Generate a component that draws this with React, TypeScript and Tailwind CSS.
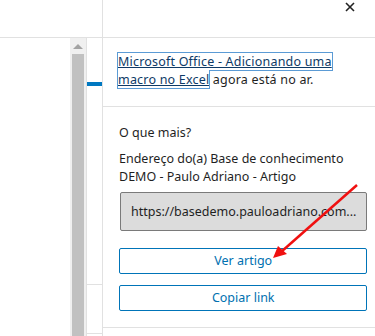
import React from "react";

export default function App() {
  const font = { fontFamily: '"Noto Sans", "Segoe UI", sans-serif' };
  return (
    <div className="relative flex h-[336px] w-[375px] overflow-hidden bg-white text-[12.5px] text-[#1f1f1f]" style={font}>
      {/* left column */}
      <div className="flex w-[102px] shrink-0 flex-col">
        <div className="h-[38px] shrink-0 border-b border-[#e1e1e1]" />
        <div className="flex flex-1">
          <div className="w-[70px]" />
          <div className="flex w-[17px] flex-col items-center border-r border-[#e1e1e1] bg-[#f0f0f0]">
            <div className="mt-[6px] h-0 w-0 border-x-[5px] border-b-[5px] border-x-transparent border-b-[#a3a3a3]" />
            <div className="mt-[5px] w-[12px] flex-1 bg-[#c1c1c1]" />
          </div>
          <div className="flex w-[15px] flex-col">
            <div className="mt-[44px] h-[4px] bg-[#0078c1]" />
            <div className="mt-[198px] h-[50px] border-y border-[#e1e1e1]" />
          </div>
        </div>
      </div>
      {/* right panel */}
      <div className="flex flex-1 flex-col border-l border-[#e1e1e1]">
        <div className="relative h-[38px] shrink-0 border-b border-[#e1e1e1]">
          <svg className="absolute left-[242px] top-[2px]" width="10" height="10" viewBox="0 0 10 10">
            <path d="M1 1L9 9M9 1L1 9" stroke="#222" strokeWidth="1.6" />
          </svg>
        </div>
        <div className="border-b border-[#e1e1e1] pb-[17px] pl-[15px] pr-[32px] pt-[15px] leading-[18px] tracking-[0.2px]">
          <span className="outline outline-1 outline-[#5b9bd5] text-[#0e3a66] underline box-decoration-clone">
            Microsoft Office - Adicionando uma macro no Excel
          </span>{" "}
          agora está no ar.
        </div>
        <div className="flex flex-col border-b border-[#e1e1e1] pb-[16px] pl-[16px] pr-[9px] pt-[17px] leading-[18px]">
          <div>O que mais?</div>
          <div className="mt-[8px]">Endereço do(a) Base de conhecimento DEMO - Paulo Adriano - Artigo</div>
          <div className="ml-[1px] mt-[6px] flex h-[39px] items-center overflow-hidden whitespace-nowrap rounded-[2px] border border-[#7a7a7a] bg-[#dcdcdc] px-[10px]">
            https://basedemo.pauloadriano.com...
          </div>
          <button className="mt-[17px] h-[26px] rounded-[2px] border border-[#0074b8] text-[#0070b0]">Ver artigo</button>
          <button className="mt-[11px] h-[26px] rounded-[2px] border border-[#0074b8] text-[#0070b0]">Copiar link</button>
        </div>
      </div>
      {/* red annotation arrow */}
      <svg className="pointer-events-none absolute left-0 top-0" width="375" height="336">
        <line x1="357" y1="185" x2="281" y2="252" stroke="#f01010" strokeWidth="2.5" />
        <polygon points="273,258 278,246 287,254" fill="#f01010" />
      </svg>
    </div>
  );
}
